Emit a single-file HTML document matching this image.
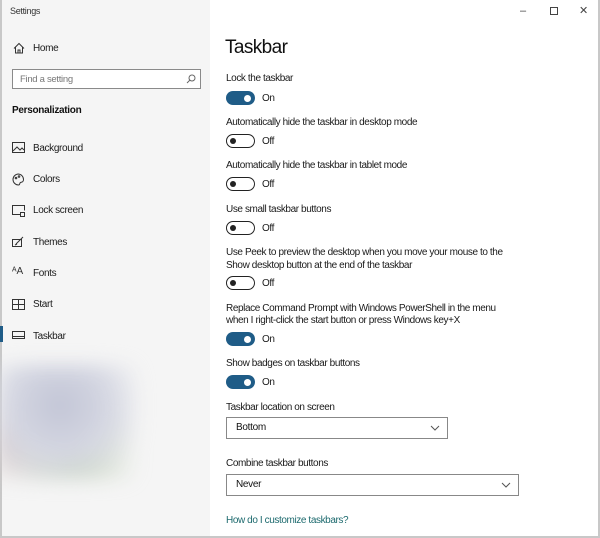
<!DOCTYPE html>
<html><head><meta charset="utf-8">
<style>
*{margin:0;padding:0;box-sizing:border-box}
body{width:600px;height:538px;overflow:hidden;background:#fff;font-family:"Liberation Sans",sans-serif;color:#111;position:relative}
.a{position:absolute;white-space:nowrap}
#side{position:absolute;left:0;top:0;width:210px;height:538px;background:#f5f5f5;border-left:2px solid #c8c8c8}
.t{font-size:10px;letter-spacing:-0.4px;color:#1a1a1a}
.nav{font-size:10px;letter-spacing:-0.35px;color:#1a1a1a}
.tg{position:absolute;width:29px;height:14px;border-radius:7px}
.on{background:#1f5c87}
.on::after{content:"";position:absolute;right:4px;top:3.5px;width:7px;height:7px;border-radius:50%;background:#fff}
.off{border:1.6px solid #222;background:#fff}
.off::after{content:"";position:absolute;left:3px;top:2.6px;width:6px;height:6px;border-radius:50%;background:#222}
.dd{position:absolute;height:22px;border:1.6px solid #888;background:#fff;font-size:10px;letter-spacing:-0.3px;padding:4px 0 0 9px}
.dd svg{position:absolute;right:7px;top:7px}
</style></head><body>
<div id="side">
  <div class="a" style="left:8px;top:6px;font-size:9px;letter-spacing:-0.3px;color:#333">Settings</div>
  <svg class="a" style="left:11px;top:42px" width="12" height="12" viewBox="0 0 12 12" fill="none" stroke="#333" stroke-width="1"><path d="M1 6.5L6 1.5l5 5M2.5 5v6h7V5M5 11V8h2v3"/></svg>
  <div class="a nav" style="left:31px;top:43px">Home</div>
  <div class="a" style="left:10px;top:69px;width:189px;height:20px;border:1.6px solid #8a8a8a;background:#fff"></div>
  <div class="a" style="left:18px;top:74px;font-size:9.5px;letter-spacing:-0.3px;color:#777">Find a setting</div>
  <svg class="a" style="left:184px;top:74px" width="10" height="10" viewBox="0 0 10 10" fill="none" stroke="#666" stroke-width="1"><circle cx="6" cy="4" r="3"/><path d="M4 6L1 9"/></svg>
  <div class="a" style="left:10px;top:105px;font-size:10px;letter-spacing:-0.3px;font-weight:bold">Personalization</div>
  <svg class="a" style="left:10px;top:142px" width="13" height="11" viewBox="0 0 13 11" fill="none" stroke="#333" stroke-width="1"><rect x="0.5" y="0.5" width="12" height="10"/><path d="M1 9l4-4 3 3 2-2 2 2"/></svg>
  <div class="a nav" style="left:31px;top:143px">Background</div>
  <svg class="a" style="left:10px;top:173px" width="13" height="13" viewBox="0 0 13 13" fill="none" stroke="#333" stroke-width="1"><path d="M6.5 1a5.5 5.5 0 1 0 0 11c1.5 0 1-2 2-2.5s3 0 3-3A5.5 5.5 0 0 0 6.5 1z"/><circle cx="4" cy="5" r="0.8"/><circle cx="7" cy="3.5" r="0.8"/></svg>
  <div class="a nav" style="left:31px;top:174px">Colors</div>
  <svg class="a" style="left:10px;top:205px" width="13" height="12" viewBox="0 0 13 12" fill="none" stroke="#333" stroke-width="1"><path d="M8 9.5H0.5v-9h12v5"/><rect x="8.5" y="7.5" width="4" height="4"/></svg>
  <div class="a nav" style="left:31px;top:205px">Lock screen</div>
  <svg class="a" style="left:10px;top:236px" width="13" height="12" viewBox="0 0 13 12" fill="none" stroke="#333" stroke-width="1"><rect x="0.5" y="3.5" width="9" height="7"/><path d="M4 8l7-7M3 9l2-1"/></svg>
  <div class="a nav" style="left:31px;top:237px">Themes</div>
  <div class="a" style="left:10px;top:266px;font-size:10px;color:#333">ᴬA</div>
  <div class="a nav" style="left:31px;top:268px">Fonts</div>
  <svg class="a" style="left:10px;top:299px" width="13" height="11" viewBox="0 0 13 11" fill="none" stroke="#333" stroke-width="1"><rect x="0.5" y="0.5" width="12" height="10"/><path d="M6.5 1v9M1 5.5h11"/></svg>
  <div class="a nav" style="left:31px;top:299px">Start</div>
  <div class="a" style="left:-2px;top:326px;width:3px;height:16px;background:#1f5c87"></div>
  <svg class="a" style="left:10px;top:331px" width="13" height="8" viewBox="0 0 13 8" fill="none" stroke="#333" stroke-width="1"><rect x="0.5" y="0.5" width="12" height="7"/><path d="M1 5.5h11"/></svg>
  <div class="a nav" style="left:31px;top:331px">Taskbar</div>
  <div class="a" style="left:-5px;top:365px;width:140px;height:115px;filter:blur(9px);background:radial-gradient(ellipse at 45% 35%,#c2c5d6 0%,#d5d7e2 45%,transparent 80%),radial-gradient(ellipse at 55% 80%,#c6d4bc 0%,transparent 60%),radial-gradient(ellipse at 10% 65%,#d4c6c6 0%,transparent 50%)"></div>
</div>
<div class="a" style="left:598px;top:0;width:2px;height:538px;background:#c8c8c8"></div>
<div class="a" style="left:0;top:536px;width:600px;height:2px;background:#c8c8c8"></div>
<div class="a" style="left:520px;top:5px;font-size:11px;color:#444">–</div>
<div class="a" style="left:550px;top:7px;width:8px;height:8px;border:1px solid #444"></div>
<div class="a" style="left:579px;top:4px;font-size:11px;color:#444">✕</div>

<div class="a" style="left:225px;top:37px;font-size:19px;letter-spacing:-0.6px;color:#111">Taskbar</div>

<div class="a t" style="left:226px;top:73px">Lock the taskbar</div>
<div class="tg on" style="left:226px;top:91px"></div><div class="a t" style="left:262px;top:93px">On</div>

<div class="a t" style="left:226px;top:117px">Automatically hide the taskbar in desktop mode</div>
<div class="tg off" style="left:226px;top:134px"></div><div class="a t" style="left:262px;top:136px">Off</div>

<div class="a t" style="left:226px;top:160px">Automatically hide the taskbar in tablet mode</div>
<div class="tg off" style="left:226px;top:177px"></div><div class="a t" style="left:262px;top:179px">Off</div>

<div class="a t" style="left:226px;top:204px">Use small taskbar buttons</div>
<div class="tg off" style="left:226px;top:221px"></div><div class="a t" style="left:262px;top:223px">Off</div>

<div class="a t" style="left:226px;top:247px">Use Peek to preview the desktop when you move your mouse to the</div>
<div class="a t" style="left:226px;top:260px">Show desktop button at the end of the taskbar</div>
<div class="tg off" style="left:226px;top:276px"></div><div class="a t" style="left:262px;top:278px">Off</div>

<div class="a t" style="left:226px;top:303px">Replace Command Prompt with Windows PowerShell in the menu</div>
<div class="a t" style="left:226px;top:315px">when I right-click the start button or press Windows key+X</div>
<div class="tg on" style="left:226px;top:332px"></div><div class="a t" style="left:262px;top:334px">On</div>

<div class="a t" style="left:226px;top:358px">Show badges on taskbar buttons</div>
<div class="tg on" style="left:226px;top:375px"></div><div class="a t" style="left:262px;top:377px">On</div>

<div class="a t" style="left:226px;top:402px">Taskbar location on screen</div>
<div class="dd" style="left:226px;top:417px;width:222px">Bottom<svg width="10" height="6" viewBox="0 0 10 6" fill="none" stroke="#555" stroke-width="1"><path d="M1 1l4 4 4-4"/></svg></div>

<div class="a t" style="left:226px;top:458px">Combine taskbar buttons</div>
<div class="dd" style="left:226px;top:474px;width:293px">Never<svg width="10" height="6" viewBox="0 0 10 6" fill="none" stroke="#555" stroke-width="1"><path d="M1 1l4 4 4-4"/></svg></div>

<div class="a t" style="left:226px;top:515px;color:#1d6a6e">How do I customize taskbars?</div>
</body></html>
